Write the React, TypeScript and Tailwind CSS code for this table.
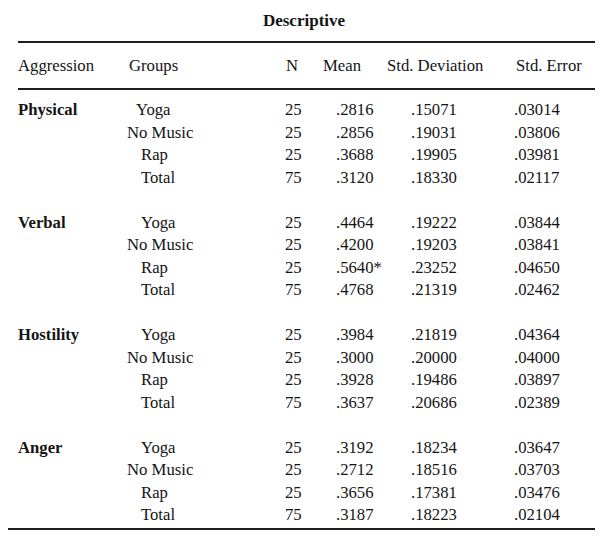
const groups = [
  {
    name: "Physical",
    rows: [
      ["Yoga", "25", ".2816", ".15071", ".03014"],
      ["No Music", "25", ".2856", ".19031", ".03806"],
      ["Rap", "25", ".3688", ".19905", ".03981"],
      ["Total", "75", ".3120", ".18330", ".02117"],
    ],
  },
  {
    name: "Verbal",
    rows: [
      ["Yoga", "25", ".4464", ".19222", ".03844"],
      ["No Music", "25", ".4200", ".19203", ".03841"],
      ["Rap", "25", ".5640*", ".23252", ".04650"],
      ["Total", "75", ".4768", ".21319", ".02462"],
    ],
  },
  {
    name: "Hostility",
    rows: [
      ["Yoga", "25", ".3984", ".21819", ".04364"],
      ["No Music", "25", ".3000", ".20000", ".04000"],
      ["Rap", "25", ".3928", ".19486", ".03897"],
      ["Total", "75", ".3637", ".20686", ".02389"],
    ],
  },
  {
    name: "Anger",
    rows: [
      ["Yoga", "25", ".3192", ".18234", ".03647"],
      ["No Music", "25", ".2712", ".18516", ".03703"],
      ["Rap", "25", ".3656", ".17381", ".03476"],
      ["Total", "75", ".3187", ".18223", ".02104"],
    ],
  },
]

// group names are indented a little unevenly in the source table
function groupIndent(label: string, first: boolean) {
  if (label === "No Music") return "pl-0"
  if (label === "Yoga") return first ? "pl-[9px]" : "pl-[14px]"
  return "pl-[14px]"
}

export default function App() {
  return (
    <div className="w-[605px] h-[537px] bg-white text-[#141414] font-[family-name:'Liberation_Serif','Times_New_Roman',serif] text-[16.7px]">
      <div className="h-[41px] pt-[10px] pl-[3px] text-center font-bold text-[17px] leading-[22px]">
        Descriptive
      </div>

      <div className="ml-[18px] mr-[10px]">
        <div className="h-[2px] bg-[#1f1f1f]" />

        {/* Header */}
        <div className="grid grid-cols-[111px_157px_37px_64px_129px_1fr] h-[45px] items-center leading-[22px]">
          <span>Aggression</span>
          <span>Groups</span>
          <span>N</span>
          <span>Mean</span>
          <span>Std. Deviation</span>
          <span>Std. Error</span>
        </div>

        <div className="h-[2px] bg-[#1f1f1f]" />

        {/* Body */}
        <div className="pt-[9px] pb-[1px] leading-[22.5px]">
          {groups.map((g, gi) => (
            <div key={g.name}>
              {gi > 0 && <div className="h-[22.5px]" />}
              {g.rows.map((r, ri) => (
                <div
                  key={r[0]}
                  className="grid grid-cols-[109px_158px_51px_75px_103px_1fr] h-[22.5px]"
                >
                  <span className="font-bold">{ri === 0 ? g.name : ""}</span>
                  <span className={groupIndent(r[0], gi === 0)}>{r[0]}</span>
                  <span>{r[1]}</span>
                  <span>{r[2]}</span>
                  <span>{r[3]}</span>
                  <span>{r[4]}</span>
                </div>
              ))}
            </div>
          ))}
        </div>
      </div>

      <div className="ml-[8px] mr-[10px] h-[2px] bg-[#1f1f1f]" />
    </div>
  )
}
